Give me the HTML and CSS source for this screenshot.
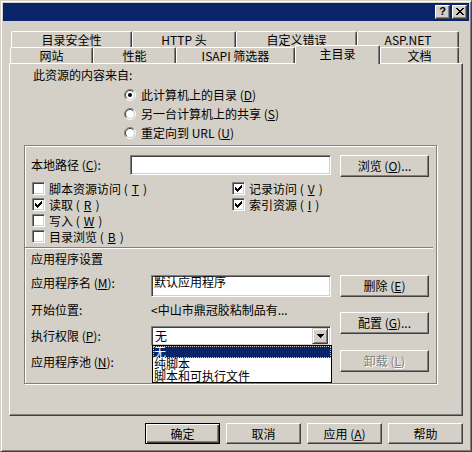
FILE: index.html
```html
<!DOCTYPE html>
<html lang="zh-CN">
<head>
    <meta charset="UTF-8">
    <meta name="viewport" content="width=device-width, initial-scale=1.0">
    <title>主目录属性</title>
    <link rel="stylesheet" href="styles.css">
</head>
<body>
<div class="window">
    <div class="titlebar">
        <span class="cap-btn help-btn">?</span>
        <span class="cap-btn">
            <svg width="8" height="7" viewBox="0 0 8 7" shape-rendering="crispEdges">
                <rect x="0" y="0" width="2" height="1"/><rect x="6" y="0" width="2" height="1"/>
                <rect x="1" y="1" width="2" height="1"/><rect x="5" y="1" width="2" height="1"/>
                <rect x="2" y="2" width="4" height="1"/>
                <rect x="3" y="3" width="2" height="1"/>
                <rect x="2" y="4" width="4" height="1"/>
                <rect x="1" y="5" width="2" height="1"/><rect x="5" y="5" width="2" height="1"/>
                <rect x="0" y="6" width="2" height="1"/><rect x="6" y="6" width="2" height="1"/>
            </svg>
        </span>
    </div>

    <div class="tabs">
        <div class="tab-row back">
            <div class="tab tab-security">目录安全性</div>
            <div class="tab tab-http">HTTP 头</div>
            <div class="tab tab-errors">自定义错误</div>
            <div class="tab tab-aspnet">ASP.NET</div>
        </div>
        <div class="tab-row front">
            <div class="tab tab-site">网站</div>
            <div class="tab tab-perf">性能</div>
            <div class="tab tab-isapi">ISAPI 筛选器</div>
            <div class="tab tab-home active">主目录</div>
            <div class="tab tab-docs">文档</div>
        </div>
    </div>

    <div class="panel">
        <div class="source-label">此资源的内容来自:</div>
        <div class="radio-list">
            <div class="radio-item">
                <svg class="radio-icon" width="12" height="12" viewBox="0 0 12 12">
                    <circle cx="6" cy="6" r="4.5" fill="#fff"/>
                    <path d="M2.1 9.9 A5.5 5.5 0 0 1 9.9 2.1" fill="none" stroke="#808080"/>
                    <path d="M9.9 2.1 A5.5 5.5 0 0 1 2.1 9.9" fill="none" stroke="#fff"/>
                    <path d="M2.8 9.2 A4.5 4.5 0 0 1 9.2 2.8" fill="none" stroke="#404040"/>
                    <path d="M9.2 2.8 A4.5 4.5 0 0 1 2.8 9.2" fill="none" stroke="#d4d0c8"/>
                    <circle cx="6" cy="6" r="2" fill="#000"/>
                </svg>
                <span>此计算机上的目录 (<u>D</u>)</span>
            </div>
            <div class="radio-item">
                <svg class="radio-icon" width="12" height="12" viewBox="0 0 12 12">
                    <circle cx="6" cy="6" r="4.5" fill="#fff"/>
                    <path d="M2.1 9.9 A5.5 5.5 0 0 1 9.9 2.1" fill="none" stroke="#808080"/>
                    <path d="M9.9 2.1 A5.5 5.5 0 0 1 2.1 9.9" fill="none" stroke="#fff"/>
                    <path d="M2.8 9.2 A4.5 4.5 0 0 1 9.2 2.8" fill="none" stroke="#404040"/>
                    <path d="M9.2 2.8 A4.5 4.5 0 0 1 2.8 9.2" fill="none" stroke="#d4d0c8"/>
                </svg>
                <span>另一台计算机上的共享 (<u>S</u>)</span>
            </div>
            <div class="radio-item">
                <svg class="radio-icon" width="12" height="12" viewBox="0 0 12 12">
                    <circle cx="6" cy="6" r="4.5" fill="#fff"/>
                    <path d="M2.1 9.9 A5.5 5.5 0 0 1 9.9 2.1" fill="none" stroke="#808080"/>
                    <path d="M9.9 2.1 A5.5 5.5 0 0 1 2.1 9.9" fill="none" stroke="#fff"/>
                    <path d="M2.8 9.2 A4.5 4.5 0 0 1 9.2 2.8" fill="none" stroke="#404040"/>
                    <path d="M9.2 2.8 A4.5 4.5 0 0 1 2.8 9.2" fill="none" stroke="#d4d0c8"/>
                </svg>
                <span>重定向到 URL (<u>U</u>)</span>
            </div>
        </div>

        <div class="frame">
            <div class="path-row">
                <div class="path-label">本地路径 (<u>C</u>):</div>
                <div class="textbox path-field"></div>
                <button class="btn side browse-btn">浏览 (<u>O</u>)...</button>
            </div>

            <div class="checks">
                <div class="check-col left-col">
                    <div class="check-item"><span class="checkbox"></span>脚本资源访问 (<u>T</u>)</div>
                    <div class="check-item"><span class="checkbox"><svg width="7" height="7" viewBox="0 0 7 7" shape-rendering="crispEdges"><rect x="6" y="0" width="1" height="1"/><rect x="5" y="1" width="2" height="1"/><rect x="0" y="2" width="1" height="1"/><rect x="4" y="2" width="3" height="1"/><rect x="0" y="3" width="2" height="1"/><rect x="3" y="3" width="3" height="1"/><rect x="0" y="4" width="5" height="1"/><rect x="1" y="5" width="3" height="1"/><rect x="2" y="6" width="1" height="1"/></svg></span>读取 (<u>R</u>)</div>
                    <div class="check-item"><span class="checkbox"></span>写入 (<u>W</u>)</div>
                    <div class="check-item"><span class="checkbox"></span>目录浏览 (<u>B</u>)</div>
                </div>
                <div class="check-col">
                    <div class="check-item"><span class="checkbox"><svg width="7" height="7" viewBox="0 0 7 7" shape-rendering="crispEdges"><rect x="6" y="0" width="1" height="1"/><rect x="5" y="1" width="2" height="1"/><rect x="0" y="2" width="1" height="1"/><rect x="4" y="2" width="3" height="1"/><rect x="0" y="3" width="2" height="1"/><rect x="3" y="3" width="3" height="1"/><rect x="0" y="4" width="5" height="1"/><rect x="1" y="5" width="3" height="1"/><rect x="2" y="6" width="1" height="1"/></svg></span>记录访问 (<u>V</u>)</div>
                    <div class="check-item"><span class="checkbox"><svg width="7" height="7" viewBox="0 0 7 7" shape-rendering="crispEdges"><rect x="6" y="0" width="1" height="1"/><rect x="5" y="1" width="2" height="1"/><rect x="0" y="2" width="1" height="1"/><rect x="4" y="2" width="3" height="1"/><rect x="0" y="3" width="2" height="1"/><rect x="3" y="3" width="3" height="1"/><rect x="0" y="4" width="5" height="1"/><rect x="1" y="5" width="3" height="1"/><rect x="2" y="6" width="1" height="1"/></svg></span>索引资源 (<u>I</u>)</div>
                </div>
            </div>

            <div class="separator"></div>
            <div class="section-title">应用程序设置</div>

            <div class="app">
                <div class="app-left">
                    <div class="app-row row-name">
                        <div class="app-label">应用程序名 (<u>M</u>):</div>
                        <div class="textbox app-field name-field">默认应用程序</div>
                    </div>
                    <div class="app-row row-start">
                        <div class="app-label">开始位置:</div>
                        <div class="app-value">&lt;中山市鼎冠胶粘制品有...</div>
                    </div>
                    <div class="app-row row-exec">
                        <div class="app-label">执行权限 (<u>P</u>):</div>
                        <div class="textbox app-field combo">
                            <span class="combo-text">无</span>
                            <span class="combo-arrow">
                                <svg width="7" height="4" viewBox="0 0 7 4" shape-rendering="crispEdges">
                                    <rect x="0" y="0" width="7" height="1"/>
                                    <rect x="1" y="1" width="5" height="1"/>
                                    <rect x="2" y="2" width="3" height="1"/>
                                    <rect x="3" y="3" width="1" height="1"/>
                                </svg>
                            </span>
                            <div class="dropdown">
                                <div class="dropdown-item selected">无</div>
                                <div class="dropdown-item">纯脚本</div>
                                <div class="dropdown-item">脚本和可执行文件</div>
                            </div>
                        </div>
                    </div>
                    <div class="app-row row-pool">
                        <div class="app-label">应用程序池 (<u>N</u>):</div>
                    </div>
                </div>
                <div class="app-right">
                    <button class="btn side">删除 (<u>E</u>)</button>
                    <button class="btn side config-btn">配置 (<u>G</u>)...</button>
                    <button class="btn side unload-btn disabled">卸载 (<u>L</u>)</button>
                </div>
            </div>
        </div>
    </div>

    <div class="footer">
        <button class="btn default">确定</button>
        <button class="btn">取消</button>
        <button class="btn">应用 (<u>A</u>)</button>
        <button class="btn">帮助</button>
    </div>
</div>
</body>
</html>
```

FILE: styles.css
```css
body {
    margin: 0;
    font-family: "Noto Sans CJK SC", "Liberation Sans", sans-serif;
    font-size: 12px;
    color: #000;
}
u {
    text-decoration: underline;
    text-underline-offset: 1px;
    text-decoration-skip-ink: none;
}

/* window frame */
.window {
    width: 472px;
    height: 452px;
    box-sizing: border-box;
    background: #d4d0c8;
    border: 1px solid;
    border-color: #d4d0c8 #404040 #404040 #d4d0c8;
    box-shadow: inset 1px 1px #fff, inset -1px -1px #808080;
    padding: 2px;
    display: flex;
    flex-direction: column;
}
.titlebar {
    height: 18px;
    background: #0a246a;
    display: flex;
    justify-content: flex-end;
    align-items: center;
    gap: 2px;
    padding-right: 2px;
}
.cap-btn {
    width: 15px;
    height: 14px;
    box-sizing: border-box;
    background: #d4d0c8;
    border: 1px solid;
    border-color: #fff #404040 #404040 #fff;
    box-shadow: inset -1px -1px #808080;
    display: flex;
    align-items: center;
    justify-content: center;
    padding-bottom: 1px;
}
.help-btn {
    font-family: "Liberation Sans", sans-serif;
    font-weight: bold;
    font-size: 11px;
    line-height: 11px;
}

/* tabs */
.tabs {
    margin: 10px 0 0 6px;
}
.tab-row {
    display: flex;
    align-items: flex-end;
    height: 16px;
}
.tab-row.back {
    margin-left: 2px;
}
.tab-row.front {
    margin-left: 1px;
}
.tab {
    box-sizing: border-box;
    height: 16px;
    border-top: 1px solid #fff;
    border-left: 1px solid #fff;
    border-right: 1px solid #404040;
    border-radius: 2px 2px 0 0;
    box-shadow: inset -1px 0 #808080;
    background: #d4d0c8;
    text-align: center;
    line-height: 15px;
    white-space: nowrap;
}
.tab.active {
    height: 19px;
    margin-top: -2px;
    margin-bottom: -1px;
    line-height: 16px;
    position: relative;
    z-index: 1;
}
.tab-security { width: 121px; }
.tab-http { width: 104px; }
.tab-errors { width: 121px; }
.tab-aspnet { width: 102px; }
.tab-site { width: 83px; }
.tab-perf { width: 83px; }
.tab-isapi { width: 119px; }
.tab-home { width: 85px; }
.tab-docs { width: 79px; }

/* page */
.panel {
    margin: 0 6px;
    height: 353px;
    box-sizing: border-box;
    border: 1px solid;
    border-color: #fff #404040 #404040 #fff;
    box-shadow: inset -1px -1px #808080;
}
.source-label {
    margin: 4px 0 0 23px;
    line-height: 14px;
}
.radio-list {
    margin: 3px 0 0 114px;
}
.radio-item {
    display: flex;
    align-items: center;
    gap: 5px;
    height: 19px;
}

.frame {
    margin: 3px 0 0 14px;
    width: 413px;
    height: 239px;
    box-sizing: border-box;
    border: 1px solid #808080;
    box-shadow: inset 1px 1px #fff, 1px 1px #fff;
    padding: 9px 0 0 6px;
}
.path-row {
    display: flex;
    align-items: flex-start;
    height: 22px;
}
.path-label {
    width: 99px;
    line-height: 20px;
}
.textbox {
    box-sizing: border-box;
    background: #fff;
    border: 1px solid;
    border-color: #808080 #fff #fff #808080;
    box-shadow: inset 1px 1px #404040, inset -1px -1px #d4d0c8;
}
.path-field {
    width: 201px;
    height: 20px;
}
.browse-btn {
    margin-left: 9px;
}

/* buttons */
.btn {
    width: 75px;
    height: 21px;
    box-sizing: border-box;
    padding: 0;
    background: #d4d0c8;
    border: 1px solid;
    border-color: #fff #404040 #404040 #fff;
    box-shadow: inset -1px -1px #808080;
    font: inherit;
    color: #000;
    line-height: 14px;
    white-space: nowrap;
}
.btn.side {
    width: 89px;
    height: 22px;
}
.btn.default {
    border-color: #000;
    box-shadow: inset 1px 1px #fff, inset -1px -1px #404040, inset -2px -2px #808080;
}
.btn.disabled {
    color: #808080;
    text-shadow: 1px 1px #fff;
}

/* checkboxes */
.checks {
    display: flex;
    margin-top: 3px;
}
.check-col.left-col {
    width: 200px;
}
.check-item {
    display: flex;
    align-items: center;
    gap: 4px;
    height: 16px;
}
.checkbox {
    width: 13px;
    height: 13px;
    margin-left: 1px;
    box-sizing: border-box;
    background: #fff;
    border: 1px solid;
    border-color: #808080 #fff #fff #808080;
    box-shadow: inset 1px 1px #404040, inset -1px -1px #d4d0c8;
    display: flex;
    align-items: center;
    justify-content: center;
}

.separator {
    margin: 3px 0 0 -6px;
    width: 408px;
    border-top: 1px solid #808080;
    border-bottom: 1px solid #fff;
}
.section-title {
    margin-top: 3px;
    line-height: 14px;
}

/* application settings */
.app {
    display: flex;
    margin-top: 9px;
}
.app-left {
    width: 309px;
}
.app-right {
    display: flex;
    flex-direction: column;
}
.config-btn {
    margin-top: 15px;
}
.unload-btn {
    margin-top: 16px;
}
.app-row {
    display: flex;
    align-items: flex-start;
}
.app-label {
    width: 120px;
    line-height: 14px;
}
.app-field {
    width: 180px;
}
.row-name .app-label {
    margin-top: 1px;
}
.name-field {
    height: 22px;
    padding: 0 2px;
    line-height: 12px;
}
.row-start {
    margin-top: 6px;
}
.app-value {
    line-height: 14px;
}
.row-exec {
    margin-top: 9px;
}
.row-exec .app-label {
    line-height: 20px;
}
.row-pool {
    margin-top: 9px;
}
.combo {
    height: 20px;
    position: relative;
    display: flex;
    align-items: center;
    justify-content: space-between;
    padding: 2px;
}
.combo-text {
    line-height: 14px;
    padding-left: 1px;
}
.combo-arrow {
    width: 16px;
    height: 16px;
    box-sizing: border-box;
    background: #d4d0c8;
    border: 1px solid;
    border-color: #d4d0c8 #404040 #404040 #d4d0c8;
    box-shadow: inset 1px 1px #fff, inset -1px -1px #808080;
    display: flex;
    align-items: center;
    justify-content: center;
}
.dropdown {
    position: absolute;
    top: 100%;
    left: 0;
    width: 180px;
    box-sizing: border-box;
    background: #fff;
    border: 1px solid #000;
    z-index: 2;
}
.dropdown-item {
    height: 12px;
    line-height: 12px;
    padding-left: 1px;
    white-space: nowrap;
}
.dropdown-item.selected {
    background: #0a246a;
    color: #fff;
    outline: 1px dotted #d4d0c8;
    outline-offset: -1px;
}

/* dialog buttons */
.footer {
    display: flex;
    justify-content: flex-end;
    gap: 6px;
    margin: 7px 6px 0 0;
}
```
